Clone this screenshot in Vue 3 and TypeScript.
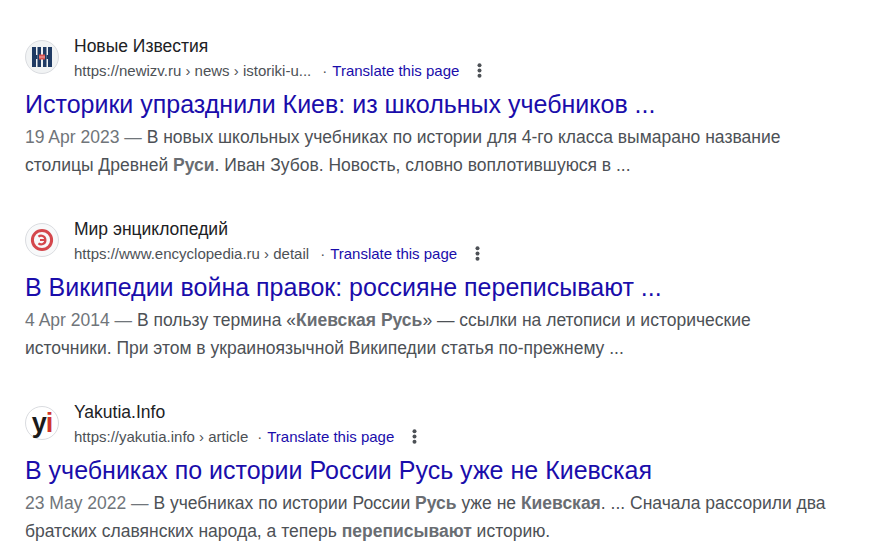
<script setup lang="ts">
interface Part {
  text: string;
  bold?: boolean;
}

interface Result {
  id: string;
  site: string;
  url: string;
  title: string;
  date: string;
  lines: Part[][];
}

const results: Result[] = [
  {
    id: 'newizv',
    site: 'Новые Известия',
    url: 'https://newizv.ru › news › istoriki-u...',
    title: 'Историки упразднили Киев: из школьных учебников ...',
    date: '19 Apr 2023 — ',
    lines: [
      [{ text: 'В новых школьных учебниках по истории для 4-го класса вымарано название' }],
      [
        { text: 'столицы Древней ' },
        { text: 'Руси', bold: true },
        { text: '. Иван Зубов. Новость, словно воплотившуюся в ...' },
      ],
    ],
  },
  {
    id: 'encyclopedia',
    site: 'Мир энциклопедий',
    url: 'https://www.encyclopedia.ru › detail',
    title: 'В Википедии война правок: россияне переписывают ...',
    date: '4 Apr 2014 — ',
    lines: [
      [
        { text: 'В пользу термина «' },
        { text: 'Киевская Русь', bold: true },
        { text: '» — ссылки на летописи и исторические' },
      ],
      [{ text: 'источники. При этом в украиноязычной Википедии статья по-прежнему ...' }],
    ],
  },
  {
    id: 'yakutia',
    site: 'Yakutia.Info',
    url: 'https://yakutia.info › article',
    title: 'В учебниках по истории России Русь уже не Киевская',
    date: '23 May 2022 — ',
    lines: [
      [
        { text: 'В учебниках по истории России ' },
        { text: 'Русь', bold: true },
        { text: ' уже не ' },
        { text: 'Киевская', bold: true },
        { text: '. ... Сначала рассорили два' },
      ],
      [
        { text: 'братских славянских народа, а теперь ' },
        { text: 'переписывают', bold: true },
        { text: ' историю.' },
      ],
    ],
  },
];
</script>

<template>
  <div class="page">
    <article v-for="r in results" :key="r.id" class="result" :class="r.id">
      <div class="head">
        <div class="favicon">
          <svg v-if="r.id === 'newizv'" width="20" height="20" viewBox="0 0 20 20">
            <g fill="#1f3a63">
              <rect x="0" y="0" width="4" height="20" />
              <rect x="5.5" y="0" width="3.5" height="20" />
              <rect x="11" y="0" width="3.5" height="20" />
              <rect x="16" y="0" width="4" height="20" />
              <rect x="4" y="8" width="1.5" height="4" />
              <rect x="14.5" y="8" width="1.5" height="4" />
            </g>
            <rect x="7" y="7.5" width="6" height="5" fill="#d9534f" />
            <rect x="7" y="9.6" width="6" height="0.8" fill="#f4c4c2" />
          </svg>
          <svg v-else-if="r.id === 'encyclopedia'" width="24" height="24" viewBox="0 0 24 24">
            <circle cx="12" cy="12" r="9.6" fill="none" stroke="#d4474c" stroke-width="3" />
            <path d="M8.4 8.6c2.4-1.8 6.8-1 7 3.4.2 4.4-4.6 5.2-7 3.4M10 12h5" fill="none" stroke="#d4474c" stroke-width="2.2" />
          </svg>
          <div v-else class="yi"><span>y</span><span class="yi-dot">i</span></div>
        </div>
        <div class="source">
          <div class="site">{{ r.site }}</div>
          <div class="url-row">
            <span class="url">{{ r.url }}</span>
            <span class="sep">·</span>
            <a class="translate">Translate this page</a>
            <svg class="more" width="5" height="15" viewBox="0 0 5 15">
              <circle cx="2.5" cy="2.2" r="2" />
              <circle cx="2.5" cy="7.5" r="2" />
              <circle cx="2.5" cy="12.8" r="2" />
            </svg>
          </div>
        </div>
      </div>
      <h3 class="title">{{ r.title }}</h3>
      <div class="snippet">
        <div v-for="(line, i) in r.lines" :key="i">
          <span v-if="i === 0" class="date">{{ r.date }}</span>
          <template v-for="(p, j) in line" :key="j">
            <b v-if="p.bold">{{ p.text }}</b>
            <template v-else>{{ p.text }}</template>
          </template>
        </div>
      </div>
    </article>
  </div>
</template>

<style scoped>
.page {
  width: 870px;
  height: 544px;
  overflow: hidden;
  padding: 34px 0 0 25px;
  box-sizing: border-box;
  background: #fff;
  font-family: "Liberation Sans", Arial, sans-serif;
}
.result {
  height: 183px;
}
.head {
  display: flex;
  align-items: flex-start;
  gap: 15px;
}
.favicon {
  width: 34px;
  height: 34px;
  margin-top: 6px;
  border-radius: 50%;
  border: 1px solid #dadce0;
  box-sizing: border-box;
  background: #f1f3f4;
  display: flex;
  align-items: center;
  justify-content: center;
}
.yakutia .favicon {
  background: #fff;
}
.encyclopedia .favicon {
  background: #f8f9fa;
}
.yi {
  font-weight: 700;
  font-size: 27px;
  line-height: 30px;
  color: #1a1a1a;
  letter-spacing: -1px;
}
.yi-dot {
  color: #d0342c;
}
.source {
  display: flex;
  flex-direction: column;
}
.site {
  font-size: 17.5px;
  line-height: 24px;
  color: #202124;
}
.url-row {
  display: flex;
  align-items: center;
  height: 24px;
}
.url,
.sep {
  font-size: 15px;
  color: #4d5156;
}
.sep {
  margin: 0 5px 0 11px;
}
.yakutia .sep {
  margin-left: 9px;
}
.translate {
  font-size: 15px;
  color: #1a0dab;
}
.more {
  margin-left: 18px;
  fill: #4d5156;
}
.title {
  margin: 6px 0 0;
  font-size: 25px;
  line-height: 32px;
  font-weight: 400;
  color: #1a0dab;
  white-space: nowrap;
}
.snippet {
  margin-top: 3px;
  font-size: 17.5px;
  line-height: 28px;
  color: #4d5156;
  white-space: nowrap;
}
.date {
  color: #70757a;
}
.snippet b {
  color: #696d72;
  font-weight: 700;
}
</style>

<style>
body {
  margin: 0;
  background: #fff;
}
</style>
